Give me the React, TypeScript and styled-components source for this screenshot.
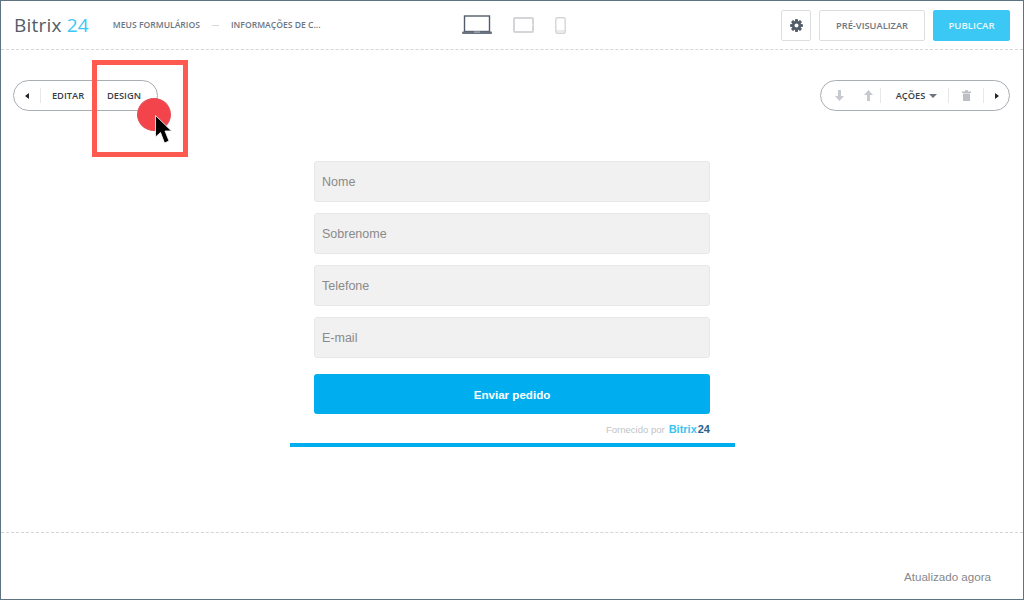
import { createGlobalStyle } from "styled-components";
import styled from "styled-components";

const GlobalStyle = createGlobalStyle`
  html, body { margin: 0; padding: 0; background: #fff; }
  body { font-family: "Liberation Sans", Arial, sans-serif; }
`;

const Frame = styled.div`
  position: relative;
  box-sizing: border-box;
  width: 1024px;
  height: 600px;
  overflow: hidden;
  background: #fff;
  border: 1px solid #5f7380;
  display: flex;
  flex-direction: column;
`;

const Header = styled.header`
  box-sizing: border-box;
  height: 49px;
  flex: none;
  display: grid;
  grid-template-columns: 1fr auto 1fr;
  align-items: center;
  padding: 0 13px 0 13px;
  border-bottom: 1px dashed #d3d5d7;
`;

const Left = styled.div`
  display: flex;
  align-items: center;
`;

const Logo = styled.div`
  font-family: "Open Sans", sans-serif;
  font-size: 19px;
  font-weight: 500;
  line-height: 24px;
  letter-spacing: 0.2px;
  color: #535c69;
  margin-right: 24px;
  white-space: nowrap;
`;

const LogoNum = styled.span`
  color: #3bc8f5;
`;

const Crumb = styled.span`
  font-family: "Open Sans", sans-serif;
  font-size: 8.6px;
  font-weight: 600;
  color: #6c7683;
  white-space: nowrap;
`;

const CrumbSep = styled.span`
  width: 7px;
  height: 1px;
  background: #d5d7da;
  margin: 0 12px 0 12px;
`;

const Devices = styled.div`
  display: flex;
  align-items: center;
  gap: 21px;
  margin-left: 3px;
`;

const Right = styled.div`
  display: flex;
  align-items: center;
  justify-content: flex-end;
  gap: 8px;
`;

const IconButton = styled.button`
  box-sizing: border-box;
  width: 30px;
  height: 31px;
  padding: 0;
  display: flex;
  align-items: center;
  justify-content: center;
  background: #fff;
  border: 1px solid #dcdfe2;
  border-radius: 2px;
`;

const TextButton = styled.button<{ $primary?: boolean }>`
  box-sizing: border-box;
  width: ${(p) => (p.$primary ? "77px" : "106px")};
  height: 31px;
  padding: 0;
  font-family: "Open Sans", sans-serif;
  font-size: ${(p) => (p.$primary ? "9.6px" : "9.3px")};
  font-weight: 600;
  color: ${(p) => (p.$primary ? "#e6f8fe" : "#6f7681")};
  background: ${(p) => (p.$primary ? "#3bc8f5" : "#fff")};
  border: 1px solid ${(p) => (p.$primary ? "#3bc8f5" : "#dcdfe2")};
  border-radius: 2px;
`;

const Stage = styled.main`
  box-sizing: border-box;
  height: 483px;
  flex: none;
  padding-top: 30px;
  border-bottom: 1px dashed #d3d5d7;
  display: flex;
  flex-direction: column;
  align-items: center;
`;

const Toolbars = styled.div`
  align-self: stretch;
  display: flex;
  justify-content: space-between;
  padding: 0 13px 0 12px;
`;

const Pill = styled.div<{ $width: number }>`
  box-sizing: border-box;
  width: ${(p) => p.$width}px;
  height: 31px;
  display: flex;
  align-items: center;
  background: #fff;
  border: 1px solid #a9aeb3;
  border-radius: 16px;
`;

const PillCell = styled.div<{ $width: number; $divider?: boolean }>`
  box-sizing: border-box;
  flex: none;
  width: ${(p) => p.$width}px;
  height: 15px;
  display: flex;
  align-items: center;
  justify-content: center;
  gap: 4px;
  border-left: ${(p) => (p.$divider ? "1px solid #e6e8ea" : "0")};
  font-family: "Open Sans", sans-serif;
  font-size: 9.3px;
  font-weight: 600;
  color: #383f49;
`;

const ActionsCell = styled(PillCell)`
  padding-left: 4px;
`;

const Form = styled.form`
  width: 396px;
  margin-top: 50px;
  display: flex;
  flex-direction: column;
  gap: 11px;
`;

const Field = styled.div`
  box-sizing: border-box;
  height: 41px;
  padding-left: 7px;
  display: flex;
  align-items: center;
  font-size: 12.5px;
  color: #8a8a8a;
  background: #f1f1f1;
  border: 1px solid #e7e7e7;
  border-radius: 3px;
`;

const Submit = styled.button`
  height: 40px;
  margin-top: 5px;
  padding: 0;
  font-family: "Liberation Sans", Arial, sans-serif;
  font-size: 11.6px;
  font-weight: 700;
  color: #fff;
  background: #00aeef;
  border: 0;
  border-radius: 3px;
`;

const Powered = styled.div`
  width: 396px;
  margin-top: 9px;
  display: flex;
  justify-content: flex-end;
  align-items: baseline;
  font-size: 9.5px;
  line-height: 12px;
  color: #c0c3c8;
`;

const PoweredBrand = styled.b`
  margin-left: 4px;
  font-size: 11px;
  color: #3bc3f2;
`;

const PoweredNum = styled.b`
  margin-left: 1px;
  font-size: 11px;
  color: #2f5f8c;
`;

const Rule = styled.div`
  width: 445px;
  height: 4px;
  margin-top: 7px;
  background: #00aeef;
`;

const Footer = styled.footer`
  flex: 1;
  display: flex;
  justify-content: flex-end;
  align-items: center;
  padding: 20px 32px 0 0;
  font-size: 11.6px;
  color: #85888c;
`;

const Highlight = styled.div`
  position: absolute;
  left: 91px;
  top: 59px;
  box-sizing: border-box;
  width: 96px;
  height: 97px;
  border: 5px solid #ff5a4f;
`;

const ClickDot = styled.div`
  position: absolute;
  left: 136px;
  top: 97px;
  width: 34px;
  height: 33px;
  border-radius: 50%;
  background: #f2444a;
  border: 1px solid #e0515a;
  box-sizing: border-box;
`;

const Pointer = styled.svg`
  position: absolute;
  left: 153px;
  top: 113px;
`;

function Laptop() {
  return (
    <svg width="30" height="20" viewBox="0 0 30 20">
      <rect x="2.5" y="1" width="25" height="15.5" fill="#fff" stroke="#535c69" strokeWidth="1.4" />
      <rect x="0" y="16.5" width="30" height="2.5" rx="1" fill="#6a7380" />
      <rect x="12" y="16.5" width="6" height="1.2" fill="#aab0b7" />
    </svg>
  );
}

function Tablet() {
  return (
    <svg width="21" height="16" viewBox="0 0 21 16">
      <rect x="1" y="1" width="19" height="14" rx="1" fill="#fff" stroke="#d3d5d8" strokeWidth="2" />
      <circle cx="19" cy="8" r="0.8" fill="#fff" />
    </svg>
  );
}

function Phone() {
  return (
    <svg width="11" height="17" viewBox="0 0 11 17">
      <rect x="0.8" y="0.8" width="9.4" height="15.4" rx="1.5" fill="#fff" stroke="#d3d5d8" strokeWidth="1.4" />
      <line x1="1" y1="14" x2="10" y2="14" stroke="#d3d5d8" />
    </svg>
  );
}

function Gear() {
  const teeth = [0, 45, 90, 135, 180, 225, 270, 315];
  return (
    <svg width="13" height="13" viewBox="0 0 24 24">
      {teeth.map((a) => (
        <rect key={a} x="9.5" y="0.5" width="5" height="23" rx="1" fill="#535c69" transform={`rotate(${a} 12 12)`} />
      ))}
      <circle cx="12" cy="12" r="8.5" fill="#535c69" />
      <circle cx="12" cy="12" r="3.6" fill="#fff" />
    </svg>
  );
}

function Caret({ dir }: { dir: "left" | "right" }) {
  return (
    <svg width="4" height="6" viewBox="0 0 4 6">
      <path d={dir === "left" ? "M4 0V6L0 3Z" : "M0 0V6L4 3Z"} fill="#20262e" />
    </svg>
  );
}

function Arrow({ up }: { up?: boolean }) {
  return (
    <svg width="9" height="11" viewBox="0 0 9 11">
      <path
        d={up ? "M4.5 0L9 5H6V11H3V5H0Z" : "M4.5 11L9 6H6V0H3V6H0Z"}
        fill="#c6c9cd"
      />
    </svg>
  );
}

function Trash() {
  return (
    <svg width="9" height="11" viewBox="0 0 9 11">
      <path d="M0 1.5H3V0.3H6V1.5H9V3H0ZM1 3.6H8V11H1Z" fill="#bcbfc3" />
    </svg>
  );
}

function DownCaret() {
  return (
    <svg width="8" height="4" viewBox="0 0 8 4">
      <path d="M0 0H8L4 4Z" fill="#6c7480" />
    </svg>
  );
}

export default function App() {
  return (
    <Frame>
      <GlobalStyle />
      <Header>
        <Left>
          <Logo>
            Bitrix <LogoNum>24</LogoNum>
          </Logo>
          <Crumb>MEUS FORMULÁRIOS</Crumb>
          <CrumbSep />
          <Crumb>INFORMAÇÕES DE C...</Crumb>
        </Left>
        <Devices>
          <Laptop />
          <Tablet />
          <Phone />
        </Devices>
        <Right>
          <IconButton>
            <Gear />
          </IconButton>
          <TextButton>PRÉ-VISUALIZAR</TextButton>
          <TextButton $primary>PUBLICAR</TextButton>
        </Right>
      </Header>

      <Stage>
        <Toolbars>
          <Pill $width={145}>
            <PillCell $width={26}>
              <Caret dir="left" />
            </PillCell>
            <PillCell $width={55} $divider>EDITAR</PillCell>
            <PillCell $width={58}>DESIGN</PillCell>
          </Pill>
          <Pill $width={190}>
            <PillCell $width={36}>
              <Arrow />
            </PillCell>
            <PillCell $width={23}>
              <Arrow up />
            </PillCell>
            <ActionsCell $width={68} $divider>
              AÇÕES <DownCaret />
            </ActionsCell>
            <PillCell $width={35} $divider>
              <Trash />
            </PillCell>
            <PillCell $width={26} $divider>
              <Caret dir="right" />
            </PillCell>
          </Pill>
        </Toolbars>
        <Form>
          <Field>Nome</Field>
          <Field>Sobrenome</Field>
          <Field>Telefone</Field>
          <Field>E-mail</Field>
          <Submit type="button">Enviar pedido</Submit>
        </Form>
        <Powered>
          Fornecido por <PoweredBrand>Bitrix</PoweredBrand>
          <PoweredNum>24</PoweredNum>
        </Powered>
        <Rule />
      </Stage>

      <Footer>Atualizado agora</Footer>

      <Highlight />
      <ClickDot />
      <Pointer width="19" height="31" viewBox="0 0 19 31">
        <path d="M1.5 1.5V23L6.5 18.5L10.5 29L15 27L11 17H17.5Z" fill="#000" stroke="#fff" strokeWidth="0.8" />
      </Pointer>
    </Frame>
  );
}
